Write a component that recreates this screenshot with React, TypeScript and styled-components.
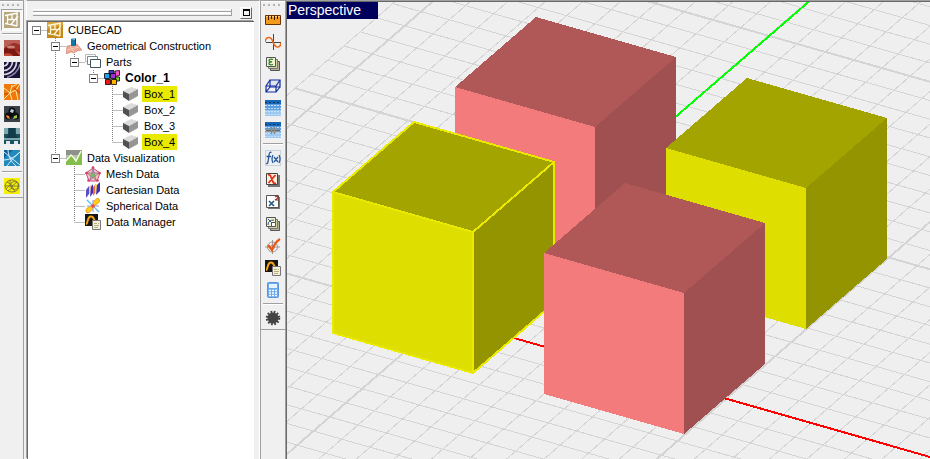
import React from 'react';
import styled, { createGlobalStyle, css } from 'styled-components';

const Global = createGlobalStyle`
  html, body, #root { height: 100%; }
  body { margin: 0; background: #f0f0f0; overflow: hidden; }
  * { box-sizing: border-box; }
  button { font: inherit; color: inherit; }
`;

const Window = styled.div`
  display: flex;
  height: 100%;
  font-family: 'Liberation Sans', Arial, sans-serif;
  font-size: 11px;
  color: #000;
`;

const Strip = styled.div<{ $side: 'left' | 'right' }>`
  flex: none;
  width: ${p => (p.$side === 'left' ? 24 : 25)}px;
  border-top: 1px solid #a0a0a0;
  ${p => (p.$side === 'left' ? 'border-right: 1px solid #a0a0a0;' : 'border-left: 1px solid #a0a0a0;')}
  background: #f0f0f0;
`;

const Bar = styled.div`
  display: flex;
  flex-direction: column;
  align-items: center;
  border-top: 1px solid #fff;
  border-bottom: 1px solid #a0a0a0;
`;

const Grip = styled.div`
  width: 20px;
  height: 2px;
  margin: 2px 0 3px;
  background: repeating-linear-gradient(90deg, #b4b4b4 0 2px, transparent 2px 5px);
`;

const Tool = styled.button<{ $pressed?: boolean }>`
  display: grid;
  place-items: center;
  width: 22px;
  height: 22px;
  padding: 0;
  border: 1px solid transparent;
  background: none;
  ${p =>
    p.$pressed &&
    css`
      border-color: #a0a0a0 #fff #fff #a0a0a0;
      background: #f7f7f7;
    `}
`;

const Divider = styled.div`
  width: 20px;
  height: 2px;
  margin: 2px 0;
  border-top: 1px solid #a0a0a0;
  border-bottom: 1px solid #fff;
`;

const Icon = styled.svg`
  display: block;
  flex: none;
  width: 16px;
  height: 16px;
`;

const Panel = styled.section`
  display: flex;
  flex: none;
  flex-direction: column;
  width: 234px;
  margin-left: 2px;
  border-top: 1px solid #a0a0a0;
  border-left: 1px solid #fff;
  border-right: 1px solid #fff;
  background: #f0f0f0;
`;

const Caption = styled.header`
  display: flex;
  align-items: center;
  gap: 8px;
  height: 20px;
  padding: 3px 7px 0 6px;
`;

const CaptionLines = styled.div`
  flex: 1;
  height: 7px;
  border-right: 1px solid #a0a0a0;
  background: linear-gradient(#fff 0 1px, #f0f0f0 1px 2px, #a0a0a0 2px 3px, #fff 3px 5px, #f0f0f0 5px 6px, #a0a0a0 6px 7px);
`;

const CaptionButton = styled.button`
  display: grid;
  place-items: center;
  width: 12px;
  height: 12px;
  padding: 0;
  border: 1px solid;
  border-color: #fff #696969 #696969 #fff;
  background: #f0f0f0;
`;

const Restore = styled.span`
  width: 7px;
  height: 7px;
  border: 1px solid #000;
  border-top-width: 2px;
`;

const Tree = styled.div`
  flex: 1;
  margin-right: 5px;
  border-top: 1px solid #696969;
  border-left: 1px solid #696969;
  box-shadow: -1px -1px #a0a0a0;
  background: #fff;
  overflow: hidden;
`;

const Row = styled.div`
  display: flex;
  align-items: center;
  height: 16px;
`;

const Cell = styled.span`
  display: grid;
  flex: none;
  align-items: center;
  justify-items: start;
  width: 19px;
  height: 16px;
  > * {
    grid-area: 1 / 1;
  }
`;

const Expander = styled.button`
  display: grid;
  place-items: center;
  width: 9px;
  height: 9px;
  margin: 1px 0 0 4px;
  padding: 0;
  border: 1px solid #808080;
  background: #fff;
  &::before {
    content: '';
    width: 5px;
    height: 1px;
    background: #000;
  }
`;

const Label = styled.span<{ $lit?: boolean; $bold?: boolean }>`
  margin-left: 3px;
  padding: 0 2px;
  line-height: 16px;
  white-space: nowrap;
  background: ${p => (p.$lit ? '#eaea00' : 'none')};
  font-weight: ${p => (p.$bold ? 700 : 400)};
  font-size: ${p => (p.$bold ? 12 : 11)}px;
`;

const Viewport = styled.main`
  flex: 1;
  min-width: 0;
  position: relative;
  border-top: 1px solid #a0a0a0;
  border-left: 1px solid #a0a0a0;
  background: #efefef;
`;

const Scene = styled.svg`
  display: block;
  width: 100%;
  height: 100%;
  border-top: 1px solid #696969;
  border-left: 1px solid #696969;
`;

const ViewName = styled.h1`
  position: absolute;
  top: 1px;
  left: 1px;
  width: 91px;
  margin: 0;
  padding-left: 1px;
  background: #00005c;
  color: #fff;
  font-size: 14px;
  font-weight: 400;
  line-height: 17px;
`;

const paper = (
  <>
    <path d="M7.500 6.500h8v9h-8z" fill="#f3efd8" stroke="#777" />
    <path d="M9 9.500h3M13 9.500h1M9 11.500h5M9 13.500h4" stroke="#b9ad82" />
  </>
);

const dataManager = (
  <>
    <path d="M0 0h13v12H0z" fill="#161616" />
    <path d="M1 10C3 10 2 2.500 6 2.500S8 8 12 8" fill="none" stroke="#f5a511" strokeWidth="2" />
    {paper}
  </>
);

const gridIcon = (
  <>
    <path d="M0 0h16v4H0z" fill="#1566b4" />
    <path d="M0 4h16v6H0z" fill="#5a9ddc" />
    <path d="M0 10h16v6H0z" fill="#9cc8f2" />
    <path d="M0 5.500h16M0 8.500h16M0 11.500h16M0 14.500h16" stroke="#c4dff8" strokeDasharray="2 1" />
    <path d="M0 2.500h16" stroke="#123a68" strokeDasharray="2 2" />
  </>
);

const stack = (
  <>
    <path d="M5.500 5.500h9v9h-9z" fill="#b1b09c" stroke="#555" />
    <path d="M3.500 3.500h9v9h-9z" fill="#d4d39a" stroke="#777" />
    <path d="M1.500 1.500h9v9h-9z" fill="#f1f3d0" stroke="#555" />
  </>
);

const cadLines = 'M3.500 3v9M1 3.500 14 1M1 11.500l6 1L14 4M4 7.500h6M8 3v4M13 2v12M7 12.500l6 1.500';

const glyphs: Record<string, React.ReactNode> = {
  cad: (
    <>
      <path d="M0 0h16v16H0z" fill="#c28a18" />
      <path d="M0 0h16v3L0 7z" fill="#dba53a" />
      <path d={cadLines} fill="none" stroke="#fff5d8" strokeWidth="1.300" />
    </>
  ),
  cadPale: (
    <>
      <path d="M0 0h16v16H0z" fill="#b7a67c" />
      <path d={cadLines} fill="none" stroke="#fff" strokeWidth="1.300" />
    </>
  ),
  red: (
    <>
      <path d="M0 0h16v16H0z" fill="#9c2e26" />
      <path d="M0 0h16v5Q10 1 5 5L0 8z" fill="#b96059" />
      <path d="M0 9q6-5 9-1t7 2v6H9q0-4-9-2z" fill="#7c1812" />
      <ellipse cx="7" cy="7" rx="4" ry="1.500" fill="#c98378" />
      <path d="M0 14q6-2 9 2H0zM11 10l5 2v4z" fill="#c24a38" />
    </>
  ),
  waves: (
    <>
      <path d="M0 0h16v16H0z" fill="#1c1236" />
      <path d="M0 4a5 5 0 0 0 4-4M0 8.500A9 9 0 0 0 8.500 0M0 12.500A13 13 0 0 0 12.500 0" fill="none" stroke="#d8d4e4" strokeWidth="1.700" />
      <path d="M3 15.500Q14 12 16 2" fill="none" stroke="#8d84ac" strokeWidth="1.500" />
    </>
  ),
  orange: (
    <>
      <path d="M0 0h16v16H0z" fill="#f07808" />
      <path d="m0 15 6-6 2-8M6 9l6-3 4-6M12 7l2 9M0 4l6 5M8 3l5-3M6 9l2 7" fill="none" stroke="#ffe8a0" />
      <path d="M0 10h4M10 4l6 5" stroke="#c53a00" />
    </>
  ),
  lights: (
    <>
      <path d="M0 0h16v16H0z" fill="#3a4248" />
      <circle cx="8" cy="5" r="3.500" fill="#0a0c0e" />
      <circle cx="4.500" cy="10" r="3.500" fill="#0a0c0e" />
      <circle cx="11.500" cy="10" r="3.500" fill="#0a0c0e" />
      <path d="m7 3 3 1-1 3-3-1z" fill="#b9d2e0" />
      <path d="m2 9 3 1 1 3-3-1z" fill="#f08a27" />
      <path d="m13 9-3 1-1 3 4-1z" fill="#9dcc46" />
    </>
  ),
  teal: (
    <>
      <path d="M0 0h16v16H0z" fill="#1d5260" />
      <path d="M0 0h4v6H0zM12 0h4v6h-4zM0 10h16v2H0z" fill="#7da6ad" />
      <path d="M5 0h6v5l3 5H2l3-5z" fill="#123c49" />
      <path d="M2 13h4v3H2zM10 13h4v3h-4z" fill="#dce9e9" />
    </>
  ),
  blue: (
    <>
      <path d="M0 0h16v16H0z" fill="#2389bd" />
      <path d="M0 0h9L0 8z" fill="#0d5f94" />
      <path d="m0 2 16 13M3 16Q8 8 16 2M0 10q8 0 16-8M4 0q0 9 8 16" fill="none" stroke="#cdeeff" />
    </>
  ),
  sphere: (
    <>
      <path d="M0 0h16v16H0z" fill="#f6ef00" />
      <g fill="none" stroke="#6b6b45" strokeWidth=".8">
        <ellipse cx="8" cy="8" rx="7" ry="6" />
        <circle cx="10.500" cy="7.500" r="4" />
        <path d="M1 8h14M3 4q4 2 5 4t-4 5M6 2v5L2 11M8 8l3 6M8 8l5-4" />
      </g>
    </>
  ),
  geometry: (
    <>
      <path d="m1 8 10-2 5 6-5 1-3 2-3-1-5 2z" fill="#eba994" stroke="#c4705a" strokeWidth=".5" />
      <path d="m1 12 12-3M4 8l4 6" stroke="#f8cbbb" />
      <path d="M5 1h4v7H5z" fill="#1577a8" />
      <path d="m5 1 1-1h4L9 2z" fill="#7cc4df" />
      <path d="m9 1 1-1v7L9 8z" fill="#0b4c76" />
    </>
  ),
  parts: (
    <g fill="#fff">
      <path d="M.5.500h10v7H.5z" stroke="#b5bebe" />
      <path d="M2.500 2.500h10v8h-10z" stroke="#78898b" />
      <path d="M5.500 5.500h10v8h-10z" stroke="#3e5358" />
    </g>
  ),
  colors: (
    <g stroke="#000" strokeWidth=".8">
      <path d="M5 .5h5v4H5z" fill="#3b34d8" />
      <path d="m11 1 4.500-.5v5l-4.500 1z" fill="#ff4fc0" />
      <path d="M.5 3.500h5v5h-5z" fill="#19a0ef" />
      <path d="M6.500 3.500h5v5h-5z" fill="#a12bd8" />
      <path d="M11.500 7h4v4h-4z" fill="#79ce22" />
      <path d="M1.500 9.500h5v5h-5z" fill="#f01414" />
      <path d="M7.500 9.500h5v5h-5z" fill="#ffb400" />
    </g>
  ),
  box: (
    <>
      <path d="m0 5 8-4 7 2-9 5z" fill="#dcdcdc" />
      <path d="m0 5 6 3v7l-6-4z" fill="#505050" />
      <path d="m6 8 9-5v7l-9 5z" fill="#969696" />
    </>
  ),
  visual: (
    <>
      <path d="M0 0h16v15H0z" fill="#8d918a" />
      <path d="M0 5h16v10H0z" fill="#b3bea8" />
      <path d="m0 11 5-6 3 3 2 3 5-11h1v15H0z" fill="#84bd4c" />
      <path d="m0 11 5-6 3 3 2 3 5-10" fill="none" stroke="#f4ffe0" strokeWidth="1.400" />
    </>
  ),
  mesh: (
    <>
      <path d="m8 2 7 5-3 8H4L1 7z" fill="#f3c9c0" stroke="#c44a78" />
      <path d="M2 7h12l-9 7 3-11 3 11z" fill="#f2c45c" stroke="#8b5fb6" strokeWidth=".8" />
      <path d="m8 7 2 2-1 2H7L6 9z" fill="#6bc55f" />
      <g fill="#dd3864">
        <circle cx="8" cy="1.500" r="1.300" />
        <circle cx="1.500" cy="7" r="1.300" />
        <circle cx="14.500" cy="7" r="1.300" />
        <circle cx="3.500" cy="14.500" r="1.300" />
        <circle cx="12.500" cy="14.500" r="1.300" />
      </g>
    </>
  ),
  cartesian: (
    <>
      <path d="m1 8 3-4v8l-3 4z" fill="#5550c8" />
      <path d="m4 4 3-1v6l-3 3z" fill="#f6c49b" />
      <path d="m6 5 2-3v9l-3 4z" fill="#3a2fc0" />
      <path d="m8 5 3-3v8l-3 4z" fill="#f0702a" />
      <path d="m10 3 2-1v7l-2 2z" fill="#f8dd55" />
      <path d="m12 3 3-3v9l-4 4z" fill="#402fb6" />
    </>
  ),
  spherical: (
    <>
      <path d="M8 2v12M2 8h12M3 3l10 10" stroke="#5a78d8" strokeWidth=".8" />
      <path d="M8 8q0-6 5-8 5 4-5 8z" fill="#ffd21c" stroke="#f09a2a" />
      <path d="M8 8q-1 6-6 7-4-5 6-7z" fill="#ffd21c" stroke="#f09a2a" />
      <circle cx="8" cy="8" r="1.800" fill="#e84a4a" />
      <path d="m2 2 4 4M10 10l4 4" stroke="#60c2ee" strokeWidth="1.500" />
    </>
  ),
  data: dataManager,
  ruler: (
    <>
      <path d="M.5 3.500h15v9H.5z" fill="#f49a1c" stroke="#6b3203" />
      <path d="M1 4.500h14" stroke="#ffd18a" />
      <path d="M3.500 4v4M6.500 4v3M9.500 4v4M12.500 4v3" stroke="#3c1d02" />
    </>
  ),
  sine: (
    <>
      <path d="M1 8.500h15M8.500 0v16" stroke="#444" />
      <path d="M0 8C1 2 6 2 8 8s7 7 8 1" fill="none" stroke="#ed6a1a" strokeWidth="1.600" />
    </>
  ),
  epsilon: (
    <>
      {stack}
      <path d="M8 3.500q-4-1-4 1 0 1 3 1.500-3 0-3 1.500 0 2 4 1" fill="none" stroke="#1d7a2b" strokeWidth="1.200" />
    </>
  ),
  wire: (
    <g fill="none" stroke="#102ba0" strokeWidth="1.200">
      <path d="M5 2h10v7H5z" fill="#dfe6ee" />
      <path d="M1 8h10v6H1zM1 8l4-6M11 8l4-6M11 14l4-5M1 14l4-5" />
    </g>
  ),
  table: gridIcon,
  tableLink: (
    <>
      {gridIcon}
      <path d="M1 8.500h14" stroke="#a5a5a5" strokeWidth="3" />
      <path d="M1 8.500h14" stroke="#62686c" strokeWidth="1.500" />
      <path d="M6.500 5v7M9.500 5v7" stroke="#8a8a8a" strokeWidth="1.500" />
    </>
  ),
  fx: (
    <>
      <path d="M.5.500h15v15H.5z" fill="none" stroke="#9db4d0" strokeDasharray="1 1" />
      <path d="M6.500 2.500Q4.500 1.500 4 5L3 12q-.5 2-2 1.500M1.500 6.500H6M8 5q-2 4 0 8M14 5q2 4 0 8M9 7l4 5M13 7l-4 5" fill="none" stroke="#24599b" strokeWidth="1.300" />
    </>
  ),
  chi: (
    <>
      <path d="M3 3h12v12H3z" fill="#777" />
      <path d="M1.500 1.500h11v11h-11z" fill="#f7f1dd" stroke="#444" />
      <path d="M3 3q2-1 3 2l2 5q1 2 3 1M10.500 3 3.500 11" fill="none" stroke="#e1301a" strokeWidth="1.800" />
    </>
  ),
  square: (
    <>
      <path d="M3 3h12v12H3z" fill="#777" />
      <path d="M1.500 1.500h12v12h-12z" fill="#fff" stroke="#555" />
      <path d="m4 7 5 5M9 7l-5 5" stroke="#245a85" strokeWidth="1.700" />
      <path d="M10 3q3-1.500 3 0t-3 3h3" fill="none" stroke="#b91b14" strokeWidth="1.200" />
    </>
  ),
  curves: (
    <>
      {stack}
      <path d="M3 9q0-5 6-5M3 3l5 5" fill="none" stroke="#285a9b" />
      <path d="M6.500 6.500h4v4h-4z" fill="#fff" stroke="#555" />
    </>
  ),
  check: (
    <>
      <circle cx="7.500" cy="9" r="5" fill="none" stroke="#999" />
      <circle cx="7.500" cy="9" r="2" fill="none" stroke="#999" />
      <path d="M7.500 2v14M0 9h15" stroke="#999" />
      <path d="m3 7 4 5q3-8 8-11" fill="none" stroke="#f0560f" strokeWidth="2.200" />
    </>
  ),
  calculator: (
    <>
      <rect x="2.500" y=".5" width="11" height="15" rx="1" fill="#6aaaf0" stroke="#5a94dc" />
      <path d="M4 2h8v4H4z" fill="#e5f3ff" />
      <path d="M4 8.500h8M4 11h8M4 13.500h8" stroke="#fff" strokeWidth="1.500" strokeDasharray="2 1" />
    </>
  ),
  gear: (
    <>
      <circle cx="8" cy="8" r="5.500" fill="#444" />
      <circle cx="8" cy="8" r="6" fill="none" stroke="#444" strokeWidth="2.500" strokeDasharray="1.700 1.440" />
    </>
  ),
};

const Glyph = ({ name }: { name: string }) => (
  <Icon viewBox="0 0 16 16" aria-hidden="true">
    {glyphs[name]}
  </Icon>
);

const modules = ['cadPale', '-', 'red', 'waves', 'orange', 'lights', 'teal', 'blue', '-', 'sphere'];
const tools = [
  'ruler', 'sine', 'epsilon', 'wire', 'table', 'tableLink', '-',
  'fx', 'chi', 'square', 'curves', 'check', 'data', 'calculator', '-', 'gear',
];

const ToolColumn = ({ items, label }: { items: string[]; label: string }) => (
  <Bar role="toolbar" aria-label={label}>
    <Grip />
    {items.map((name, i) =>
      name === '-' ? (
        <Divider key={i} />
      ) : (
        <Tool key={i} type="button" aria-label={name} $pressed={name === 'cadPale'}>
          <Glyph name={name} />
        </Tool>
      ),
    )}
  </Bar>
);

/* Guide letters, one per column: r root, t tee, e last child, i pass-through, s blank. Upper case adds an expander. */
type Node = { guides: string; icon: string; text: string; lit?: boolean; bold?: boolean };
const nodes: Node[] = [
  { guides: 'R', icon: 'cad', text: 'CUBECAD' },
  { guides: 'sT', icon: 'geometry', text: 'Geometrical Construction' },
  { guides: 'siE', icon: 'parts', text: 'Parts' },
  { guides: 'sisE', icon: 'colors', text: 'Color_1', bold: true },
  { guides: 'sisst', icon: 'box', text: 'Box_1', lit: true },
  { guides: 'sisst', icon: 'box', text: 'Box_2' },
  { guides: 'sisst', icon: 'box', text: 'Box_3' },
  { guides: 'sisse', icon: 'box', text: 'Box_4', lit: true },
  { guides: 'sE', icon: 'visual', text: 'Data Visualization' },
  { guides: 'sst', icon: 'mesh', text: 'Mesh Data' },
  { guides: 'sst', icon: 'cartesian', text: 'Cartesian Data' },
  { guides: 'sst', icon: 'spherical', text: 'Spherical Data' },
  { guides: 'sse', icon: 'data', text: 'Data Manager' },
];

const guidePaths: Record<string, string> = {
  r: 'M8.500 8.500H19',
  t: 'M8.500 0V16M8.500 8.500H19',
  e: 'M8.500 0V8M8.500 8.500H19',
  i: 'M8.500 0V16',
  s: '',
};

const Guide = ({ kind, name }: { kind: string; name: string }) => (
  <Cell>
    <svg width="19" height="16" aria-hidden="true">
      <path d={guidePaths[kind.toLowerCase()]} stroke="#808080" strokeDasharray="1 1" fill="none" />
    </svg>
    {kind !== kind.toLowerCase() && <Expander type="button" aria-label={`Collapse ${name}`} aria-expanded />}
  </Cell>
);

/* Ground grid: both line families are described by their height at x = ORIGIN. */
const ORIGIN = 287;
const RIGHT = 1600;
const ALONG = 0.285;
const ACROSS = -0.868;
const EDGE = 95.4;

const rowLines = Array.from({ length: 75 }, (_, i) => {
  const k = i - 50;
  const y0 = 273.5 + 18.75 * k;
  const start = Math.max(0, (EDGE - y0) / (ALONG - ACROSS));
  return { k, x1: ORIGIN + start, y1: y0 + ALONG * start, x2: RIGHT, y2: y0 + ALONG * (RIGHT - ORIGIN) };
});

const columnLines = Array.from({ length: 52 }, (_, i) => {
  const k = i - 1;
  const y0 = 128 + 32.6 * k;
  return { k, x1: ORIGIN, y1: y0, x2: RIGHT, y2: y0 + ACROSS * (RIGHT - ORIGIN) };
});

const palettes = {
  pink: ['#b05858', '#f37b7b', '#a05050'],
  yellow: ['#a4a400', '#dede00', '#949400'],
};

type CubeProps = { x: number; y: number; tone: keyof typeof palettes; selected?: boolean };

const Cube = ({ x, y, tone, selected }: CubeProps) => {
  const [top, front, side] = palettes[tone];
  const stroke = selected ? '#eaea00' : 'none';
  return (
    <g transform={`translate(${x} ${y})`} stroke={stroke} strokeWidth="2" strokeLinejoin="round">
      <path d="M0 0 81-70 221-30 140 40z" fill={top} />
      <path d="M140 40 221-30V111L140 181z" fill={side} />
      <path d="M0 0 140 40V181L0 141z" fill={front} />
    </g>
  );
};

const App = () => (
  <>
    <Global />
    <Window>
      <Strip $side="left">
        <ToolColumn items={modules} label="Modules" />
      </Strip>
      <Panel>
        <Caption>
          <CaptionLines />
          <CaptionButton type="button" aria-label="Restore panel">
            <Restore />
          </CaptionButton>
        </Caption>
        <Tree role="tree" aria-label="Project">
          {nodes.map(n => (
            <Row key={n.text} role="treeitem" aria-level={n.guides.length} aria-selected={!!n.lit}>
              {[...n.guides].map((g, i) => (
                <Guide key={i} kind={g} name={n.text} />
              ))}
              <Glyph name={n.icon} />
              <Label $lit={n.lit} $bold={n.bold}>{n.text}</Label>
            </Row>
          ))}
        </Tree>
      </Panel>
      <Strip $side="right">
        <ToolColumn items={tools} label="Tools" />
      </Strip>
      <Viewport>
        <Scene viewBox="287 2 643 457" preserveAspectRatio="xMinYMin slice" shapeRendering="crispEdges" role="img" aria-label="Four cubes on a grid">
          <g stroke="#d4d4d4">
            {[...rowLines, ...columnLines].map((l, i) => (
              <line key={i} x1={l.x1} y1={l.y1} x2={l.x2} y2={l.y2} strokeWidth={l.k % 10 === 0 ? 2 : 1} />
            ))}
          </g>
          <path d="M500 334 1000 477" stroke="#ff0000" strokeWidth="2" />
          <path d="M650 139 820-8" stroke="#00ff00" strokeWidth="2" />
          <Cube x={455} y={87} tone="pink" />
          <Cube x={666} y={148} tone="yellow" />
          <Cube x={333} y={192} tone="yellow" selected />
          <Cube x={544} y={253} tone="pink" />
        </Scene>
        <ViewName>Perspective</ViewName>
      </Viewport>
    </Window>
  </>
);

export default App;
